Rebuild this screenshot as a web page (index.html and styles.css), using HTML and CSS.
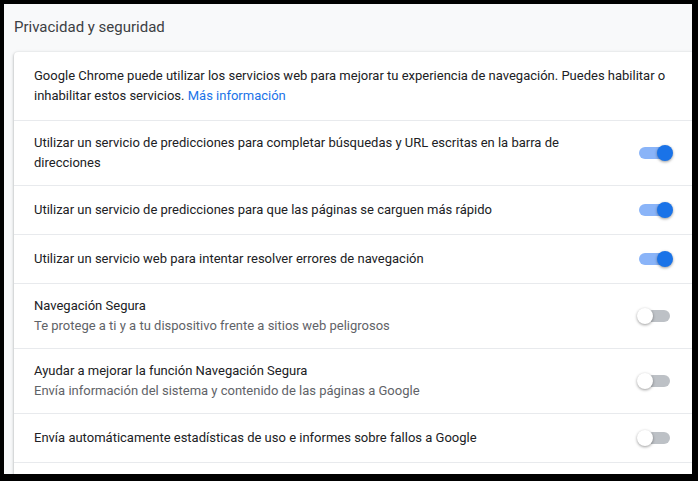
FILE: index.html
```html
<!DOCTYPE html>
<html lang="es">
<head>
<meta charset="utf-8">
<title>Privacidad y seguridad</title>
<link rel="stylesheet" href="styles.css">
</head>
<body>
<div class="frame">
  <div class="page">
    <h2 class="section-title">Privacidad y seguridad</h2>
    <div class="card">
      <div class="intro">Google Chrome puede utilizar los servicios web para mejorar tu experiencia de navegación. Puedes habilitar o inhabilitar estos servicios. <a class="link" href="#">Más información</a></div>
      <div class="row tall">
        <div class="label">Utilizar un servicio de predicciones para completar búsquedas y URL escritas en la barra de direcciones</div>
        <span class="toggle on"><span class="bar"></span><span class="knob"></span></span>
      </div>
      <div class="row">
        <div class="label">Utilizar un servicio de predicciones para que las páginas se carguen más rápido</div>
        <span class="toggle on"><span class="bar"></span><span class="knob"></span></span>
      </div>
      <div class="row">
        <div class="label">Utilizar un servicio web para intentar resolver errores de navegación</div>
        <span class="toggle on"><span class="bar"></span><span class="knob"></span></span>
      </div>
      <div class="row tall">
        <div class="label">Navegación Segura<div class="secondary">Te protege a ti y a tu dispositivo frente a sitios web peligrosos</div></div>
        <span class="toggle"><span class="bar"></span><span class="knob"></span></span>
      </div>
      <div class="row tall">
        <div class="label">Ayudar a mejorar la función Navegación Segura<div class="secondary">Envía información del sistema y contenido de las páginas a Google</div></div>
        <span class="toggle"><span class="bar"></span><span class="knob"></span></span>
      </div>
      <div class="row">
        <div class="label">Envía automáticamente estadísticas de uso e informes sobre fallos a Google</div>
        <span class="toggle"><span class="bar"></span><span class="knob"></span></span>
      </div>
      <div class="row"></div>
    </div>
  </div>
</div>
</body>
</html>
```
FILE: styles.css
```css
html, body {
  margin: 0;
  padding: 0;
  height: 100%;
  background: #000;
}
.frame {
  box-sizing: border-box;
  height: 100%;
  padding: 4px 6px 7px 4px;
}
.page {
  height: 100%;
  background: #f8f9fa;
  overflow: hidden;
  font-family: Roboto, "Liberation Sans", sans-serif;
  font-size: 13px;
  color: #202124;
}
.section-title {
  margin: 0;
  padding: 14px 0 0 10px;
  height: 34px;
  box-sizing: border-box;
  font-size: 15px;
  font-weight: 400;
  line-height: 18px;
  color: #3c4043;
}
.card {
  margin: 14px 0 0 10px;
  background: #fff;
  border-radius: 4px 0 0 4px;
  box-shadow: 0 1px 2px rgba(60,64,67,.3), 0 1px 3px 1px rgba(60,64,67,.15);
}
.intro {
  padding: 14px 20px 14px 20px;
  line-height: 20px;
  min-height: 40px;
}
.link {
  color: #1a73e8;
  text-decoration: none;
}
.row {
  display: flex;
  align-items: center;
  min-height: 48px;
  padding: 0 19px 0 20px;
  border-top: 1px solid #e8eaed;
}
.row.tall {
  min-height: 64px;
}
.label {
  flex: 1;
  line-height: 20px;
  padding-right: 40px;
}
.secondary {
  color: #5f6368;
}
.toggle {
  position: relative;
  width: 36px;
  height: 16px;
  flex: none;
}
.toggle .bar {
  position: absolute;
  left: 5px;
  top: 2px;
  width: 28px;
  height: 12px;
  border-radius: 6px;
  background: #bdc1c6;
}
.toggle .knob {
  position: absolute;
  left: 0;
  top: 0;
  width: 16px;
  height: 16px;
  border-radius: 50%;
  background: #fff;
  box-shadow: 0 1px 3px rgba(0,0,0,.4);
}
.toggle.on .bar {
  left: 2px;
  background: #8ab4f8;
}
.toggle.on .knob {
  left: 20px;
  background: #1a73e8;
}
```
